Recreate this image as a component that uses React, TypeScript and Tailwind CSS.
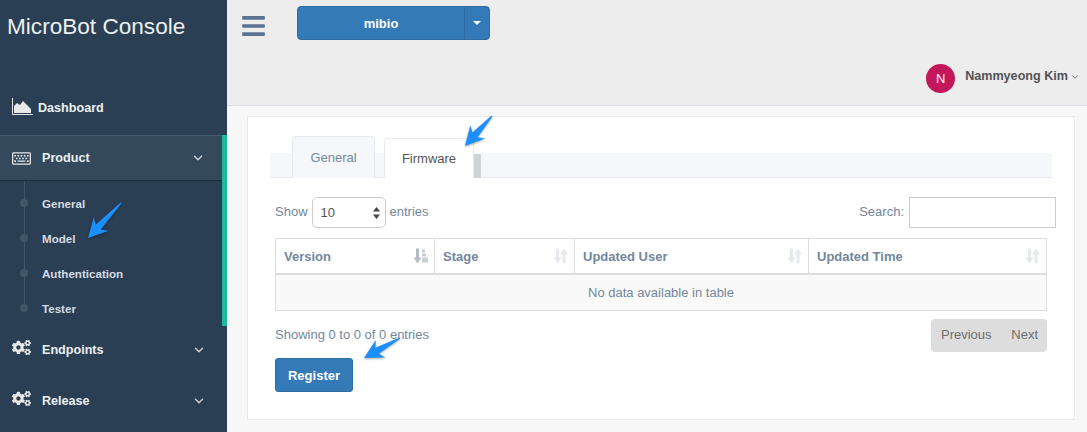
import { ChevronDown } from "lucide-react";
import { FaBars, FaCogs, FaRegKeyboard } from "react-icons/fa";

const sans = "font-['Liberation_Sans',Arial,sans-serif]";

function arrowPoints(tx: number, ty: number, hx: number, hy: number) {
  const dx = hx - tx;
  const dy = hy - ty;
  const len = Math.hypot(dx, dy);
  const ux = dx / len;
  const uy = dy / len;
  const at = (back: number, side: number) =>
    `${(hx - ux * back - uy * side).toFixed(1)},${(hy - uy * back + ux * side).toFixed(1)}`;
  return [
    at(0, 0),
    at(19, 10),
    at(15, 3.5),
    at(len, 0.6),
    at(len, -0.6),
    at(15, -3.5),
    at(19, -10),
  ].join(" ");
}

function BlueArrow({ className, points }: { className: string; points: string }) {
  return (
    <svg className={className} viewBox="0 0 50 44">
      <polygon points={points} fill="#1b8ffb" className="drop-shadow-[0_1px_1px_rgba(0,0,0,0.35)]" />
    </svg>
  );
}

function SortIcon({ active }: { active?: boolean }) {
  return (
    <svg width="15" height="16" viewBox="0 0 15 15" className="shrink-0">
      <path d="M3 0h3v9h2.500L4.500 15 .5 9H3z" fill={active ? "#b4bcc6" : "#e6e9ed"} />
      {active ? (
        <path d="M9 1h3v3H9zM9 5h4v3H9zM9 9h6v5H9z" fill="#c7ced6" />
      ) : (
        <path d="M11 0l4 6h-2.500v9h-3V6H7z" fill="#e6e9ed" />
      )}
    </svg>
  );
}

function AreaIcon() {
  return (
    <svg width="21" height="17" viewBox="0 0 21 17" className="mb-[4px] mr-[5px] shrink-0">
      <path d="M.5 0v16.500H21" fill="none" stroke="#e7e7e7" />
      <path d="M2 15V8l3-3 3 2 3-4 3 3 2 2 3 3v4z" fill="#e7e7e7" />
    </svg>
  );
}

function SubItem({ label, first, last }: { label: string; first?: boolean; last?: boolean }) {
  return (
    <div className="relative flex h-[35px] items-center pl-[42px] text-[11.6px] font-bold text-[#d5dbe2]">
      <span
        className={`absolute left-[24px] w-px bg-[#425668] ${first ? "top-[-5px] bottom-0" : last ? "top-0 bottom-1/2" : "inset-y-0"}`}
      />
      <span className="absolute left-[20px] top-[13px] h-[8px] w-[8px] rounded-full bg-[#425668]" />
      {label}
    </div>
  );
}

function MenuRow({ label }: { label: string }) {
  return (
    <div className="mb-[5px] flex h-[46px] items-center pl-[12px] pr-[21px] pt-[2px] text-[12.6px] font-bold text-[#ecf0f1]">
      <FaCogs className="mb-[5px] mr-[11px] h-[19px] w-[19px] text-[#e7e7e7]" />
      <span className="flex-1">{label}</span>
      <ChevronDown size={14} strokeWidth={2.5} className="text-[#c9d0d6]" />
    </div>
  );
}

function Sidebar() {
  return (
    <aside className="flex w-[227px] shrink-0 flex-col bg-[#2a3f54]">
      <div className="flex h-[54px] items-center pl-[7px] text-[22.6px] text-[#ecf0f1]">MicroBot Console</div>
      <div className="mb-[4px] mt-[31px] flex h-[46px] items-center pl-[12px] text-[12.6px] font-bold text-[#ecf0f1]">
        <AreaIcon />
        Dashboard
      </div>
      <div className="border-r-[5px] border-[#1abb9c]">
        <div className="flex h-[46px] items-center border-y border-y-[#1f2e3c] border-t-[#4a5b6c] bg-[#35495d] pl-[12px] pr-[17px] text-[12.6px] font-bold text-[#ecf0f1]">
          <FaRegKeyboard className="mr-[11px] h-[19px] w-[19px] text-[#e7e7e7]" />
          <span className="flex-1 pt-[1px]">Product</span>
          <ChevronDown size={14} strokeWidth={2.5} className="text-[#c9d0d6]" />
        </div>
        <div className="pt-[5px]">
          <SubItem label="General" first />
          <SubItem label="Model" />
          <SubItem label="Authentication" />
          <SubItem label="Tester" last />
        </div>
      </div>
      <MenuRow label="Endpoints" />
      <MenuRow label="Release" />
    </aside>
  );
}

function Topbar() {
  return (
    <header className="h-[106px] shrink-0 border-b border-[#d9dee4] bg-[#ededed]">
      <div className="flex items-start pl-[15px] pt-[6px]">
        <FaBars className="mt-[7px] h-[26px] w-[23px] text-[#5a738e]" />
        <div className="ml-[32px] flex h-[34px] w-[193px] rounded-[4px] border border-[#2e6da4] bg-[#337ab7] text-white">
          <div className="flex flex-1 items-center justify-center pt-[1px] text-[13px] font-bold">mibio</div>
          <div className="flex w-[25px] items-center justify-center border-l border-[#2e6da4]">
            <span className="h-0 w-0 border-x-[4px] border-t-[4px] border-x-transparent border-t-white" />
          </div>
        </div>
      </div>
      <div className="mt-[24px] flex items-center justify-end pr-[7px]">
        <div className="flex h-[29px] w-[29px] items-center justify-center rounded-full bg-[#c2185b] text-[13px] text-white">N</div>
        <span className="mb-[4px] ml-[10px] text-[12.6px] font-bold text-[#515356]">Nammyeong Kim</span>
        <ChevronDown size={10} className="mb-[3px] ml-[2px] text-[#515356]" />
      </div>
    </header>
  );
}

function Tabs() {
  return (
    <div className="relative mx-[22px] mt-[19px] flex h-[42px] items-end pl-[22px]">
      <div className="absolute inset-x-0 bottom-0 h-[25px] border-b border-[#e6e9ed] bg-[#f5f7fa]" />
      <div className="relative flex h-[42px] w-[83px] items-center justify-center rounded-t-[4px] border border-b-0 border-[#e6e9ed] bg-[#f5f7fa] text-[#73879c]">General</div>
      <div className="relative ml-[9px] flex h-[40px] w-[90px] items-center justify-center rounded-t-[4px] border border-b-0 border-[#e6e9ed] bg-white text-[#555555]">Firmware</div>
      <div className="relative h-[24px] w-[7px] bg-[#d0d3d6]" />
    </div>
  );
}

function Controls() {
  return (
    <div className="ml-[27px] mr-[18px] mt-[19px] flex items-center">
      <span className="mb-[2px]">Show</span>
      <div className="mx-[4px] flex h-[31px] w-[74px] items-center rounded-[5px] border border-[#cccccc] pl-[8px] pr-[5px] text-[#555555]">
        <span className="flex-1">10</span>
        <svg width="7" height="12" viewBox="0 0 7 12">
          <path d="M3.500 0L7 4.500H0zM3.500 12L0 7.500H7z" fill="#444" />
        </svg>
      </div>
      <span className="mb-[2px]">entries</span>
      <span className="mb-[2px] ml-auto mr-[5px]">Search:</span>
      <div className="h-[31px] w-[147px] border border-[#cccccc]" />
    </div>
  );
}

function DataTable() {
  const cols = [
    { label: "Version", w: "w-[159px]", active: true },
    { label: "Stage", w: "w-[140px]" },
    { label: "Updated User", w: "w-[234px]" },
    { label: "Updated Time", w: "flex-1" },
  ];
  return (
    <div className="ml-[27px] mt-[10px] w-[772px] border border-[#dddddd]">
      <div className="flex h-[36px] border-b-2 border-[#dddddd]">
        {cols.map((c, i) => (
          <div
            key={c.label}
            className={`flex items-center justify-between pl-[8px] pr-[6px] font-bold text-[#73879c] ${c.w} ${i < 3 ? "border-r border-[#dddddd]" : ""}`}
          >
            <span className="pt-[1px]">{c.label}</span>
            <SortIcon active={c.active} />
          </div>
        ))}
      </div>
      <div className="flex h-[35px] items-center justify-center bg-[#f9f9f9]">No data available in table</div>
    </div>
  );
}

function Footer() {
  return (
    <div className="mt-[8px] flex items-center pl-[27px]">
      <span className="mb-[2px]">Showing 0 to 0 of 0 entries</span>
      <div className="ml-auto mr-[27px] flex h-[33px] w-[116px] items-center justify-between rounded-[4px] bg-[#dddddd] pb-[2px] pl-[10px] pr-[9px] text-[#6e6e6e]">
        <span>Previous</span>
        <span>Next</span>
      </div>
    </div>
  );
}

export default function App() {
  return (
    <div className={`relative flex h-[432px] w-[1087px] overflow-hidden bg-[#f7f7f7] ${sans}`}>
      <Sidebar />
      <main className="flex min-w-0 flex-1 flex-col">
        <Topbar />
        <div className="ml-[20px] mr-[12px] mt-[10px] h-[304px] border border-[#e6e9ed] bg-white text-[13px] text-[#73879c]">
          <Tabs />
          <Controls />
          <DataTable />
          <Footer />
          <button className="ml-[27px] mt-[6px] h-[34px] w-[78px] rounded-[3px] border border-[#2e6da4] bg-[#337ab7] pt-[1px] text-[13px] font-bold text-white">Register</button>
        </div>
      </main>
      <BlueArrow className="absolute left-[82px] top-[198px] h-[44px] w-[50px]" points={arrowPoints(39, 5, 6, 40)} />
      <BlueArrow className="absolute left-[458px] top-[112px] h-[44px] w-[50px]" points={arrowPoints(34, 4, 7, 34)} />
      <BlueArrow className="absolute left-[358px] top-[328px] h-[44px] w-[50px]" points={arrowPoints(42, 10, 6, 30)} />
    </div>
  );
}
